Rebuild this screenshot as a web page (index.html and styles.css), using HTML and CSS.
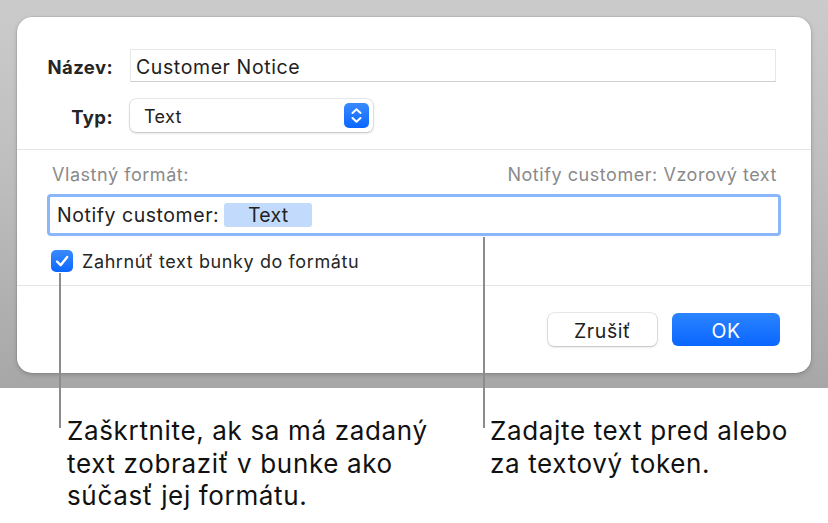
FILE: index.html
```html
<!DOCTYPE html>
<html lang="sk">
<head>
<meta charset="utf-8">
<title>Vlastný formát</title>
<link rel="stylesheet" href="styles.css">
</head>
<body>
<div class="stage">
  <div class="backdrop">
    <div class="dialog">
      <div class="section top">
        <div class="row">
          <span class="lbl">Název:</span>
          <div class="field name">Customer Notice</div>
        </div>
        <div class="row">
          <span class="lbl">Typ:</span>
          <div class="popup">
            <span class="popup-text">Text</span>
            <svg class="stepper" width="25" height="25" viewBox="0 0 25 25">
              <defs>
                <linearGradient id="bg1" x1="0" y1="0" x2="0" y2="1">
                  <stop offset="0" stop-color="#3a8bff"/>
                  <stop offset="1" stop-color="#0a66ff"/>
                </linearGradient>
              </defs>
              <rect x="0" y="0" width="25" height="25" rx="5" fill="url(#bg1)"/>
              <path d="M8.5 10 L12.5 6.3 L16.5 10 M8.5 15 L12.5 18.7 L16.5 15" fill="none" stroke="#fff" stroke-width="2" stroke-linecap="round" stroke-linejoin="round"/>
            </svg>
          </div>
        </div>
      </div>
      <div class="section mid">
        <div class="fmt-head">
          <span>Vlastný formát:</span>
          <span>Notify customer: Vzorový text</span>
        </div>
        <div class="fmt-field">
          <span class="fmt-text">Notify customer:</span>
          <span class="token">Text</span>
        </div>
        <div class="check-row">
          <svg class="checkbox" width="22" height="22" viewBox="0 0 22 22">
            <defs>
              <linearGradient id="bg2" x1="0" y1="0" x2="0" y2="1">
                <stop offset="0" stop-color="#3a8bff"/>
                <stop offset="1" stop-color="#0a66ff"/>
              </linearGradient>
            </defs>
            <rect x="0" y="0" width="22" height="22" rx="5" fill="url(#bg2)"/>
            <path d="M6 11.5 L9.6 15.2 L16.2 7" fill="none" stroke="#fff" stroke-width="2.4" stroke-linecap="round" stroke-linejoin="round"/>
          </svg>
          <span class="check-label">Zahrnúť text bunky do formátu</span>
        </div>
      </div>
      <div class="section foot">
        <button class="btn cancel">Zrušiť</button>
        <button class="btn ok">OK</button>
      </div>
    </div>
  </div>
  <div class="notes">
    <p class="note">Zaškrtnite, ak sa má zadaný<br>text zobraziť v bunke ako<br>súčasť jej formátu.</p>
    <p class="note">Zadajte text pred alebo<br>za textový token.</p>
  </div>
  <span class="leader leader-check"></span>
  <span class="leader leader-field"></span>
</div>
</body>
</html>
```
FILE: styles.css
```css
* { box-sizing: border-box; }
html, body { margin: 0; padding: 0; background: #fff; }
body {
  font-family: Inter, "Noto Sans", "Liberation Sans", sans-serif;
  color: #1f1f1f;
}
.stage {
  position: relative;
  width: 828px;
  height: 523px;
  overflow: hidden;
}
.backdrop {
  height: 388px;
  padding: 17px 17px 15px 17px;
  background: linear-gradient(180deg, #cbcbcb 0%, #bebebe 45%, #a7a7a7 100%);
}
.dialog {
  width: 794px;
  height: 356px;
  background: #fff;
  border-radius: 15px;
  box-shadow: 0 0 0 0.5px rgba(0,0,0,0.12), 0 2px 5px rgba(0,0,0,0.18);
  display: flex;
  flex-direction: column;
}
.section { border-bottom: 1px solid #e4e4e4; }
.section.foot { border-bottom: none; }

.top {
  padding: 32px 35px 17px 0;
  display: flex;
  flex-direction: column;
  gap: 17px;
}
.row {
  display: grid;
  grid-template-columns: 96px auto;
  column-gap: 17px;
  align-items: center;
}
.lbl {
  text-align: right;
  font-weight: 700;
  font-size: 18.5px;
  letter-spacing: 0.4px;
  padding-top: 3px;
  color: #252525;
}
.field.name {
  height: 33px;
  border: 1px solid #e6e6e6;
  border-bottom-color: #cfcfcf;
  padding: 2px 5px 0 5px;
  font-size: 19.5px;
  letter-spacing: 0.6px;
  line-height: 31px;
  color: #222;
}
.popup {
  width: 243px;
  height: 33px;
  border-radius: 6px;
  background: #fff;
  box-shadow: 0 0 0 0.5px rgba(0,0,0,0.16), 0 1px 2.5px rgba(0,0,0,0.2);
  display: flex;
  align-items: center;
  justify-content: space-between;
  padding: 0 4px 0 14px;
}
.popup-text { font-size: 18px; letter-spacing: 0.3px; padding-top: 2px; color: #222; }
.stepper { display: block; }

.mid {
  padding: 14px 30px 13px 30px;
}
.fmt-head {
  display: flex;
  justify-content: space-between;
  padding: 1px 4px 0 5px;
  font-size: 18px;
  letter-spacing: 0.55px;
  line-height: 20px;
  height: 20px;
  color: #8a8a8a;
}
.fmt-field {
  margin-top: 10px;
  height: 42px;
  border: 3px solid #8cb6fa;
  border-radius: 4px;
  display: flex;
  align-items: center;
  gap: 5px;
  padding-left: 7px;
  font-size: 19.5px;
  letter-spacing: 0.55px;
  color: #222;
}
.token {
  width: 88px;
  height: 24px;
  background: #c2dbfd;
  border-radius: 3px;
  text-align: center;
  line-height: 25px;
  letter-spacing: 0.3px;
}
.check-row {
  margin-top: 14px;
  padding-left: 4px;
  display: flex;
  align-items: center;
  gap: 9px;
}
.checkbox { display: block; }
.check-label { font-size: 18px; letter-spacing: 0.6px; color: #262626; }

.foot {
  flex: 1;
  display: flex;
  justify-content: flex-end;
  align-items: flex-start;
  gap: 15px;
  padding: 27px 31px 0 0;
}
.btn {
  height: 33px;
  border: none;
  border-radius: 6px;
  font-family: inherit;
  font-size: 19.5px;
  letter-spacing: 0.6px;
  padding: 2px 0 0 0;
}
.btn.cancel {
  width: 109px;
  background: #fff;
  color: #1e1e1e;
  box-shadow: 0 0 0 0.5px rgba(0,0,0,0.16), 0 1px 2.5px rgba(0,0,0,0.2);
}
.btn.ok {
  width: 108px;
  color: #fff;
  background: linear-gradient(180deg, #2b84ff 0%, #0a66ff 100%);
}

.notes {
  display: grid;
  grid-template-columns: 423px auto;
  padding: 27px 0 0 67px;
}
.note {
  margin: 0;
  font-size: 26px;
  letter-spacing: 0.65px;
  line-height: 32.5px;
  color: #111;
}
.leader {
  position: absolute;
  width: 2px;
  background: #8c8c8c;
}
.leader-check { left: 59px; top: 273px; height: 155px; }
.leader-field { left: 483px; top: 237px; height: 191px; }
```
